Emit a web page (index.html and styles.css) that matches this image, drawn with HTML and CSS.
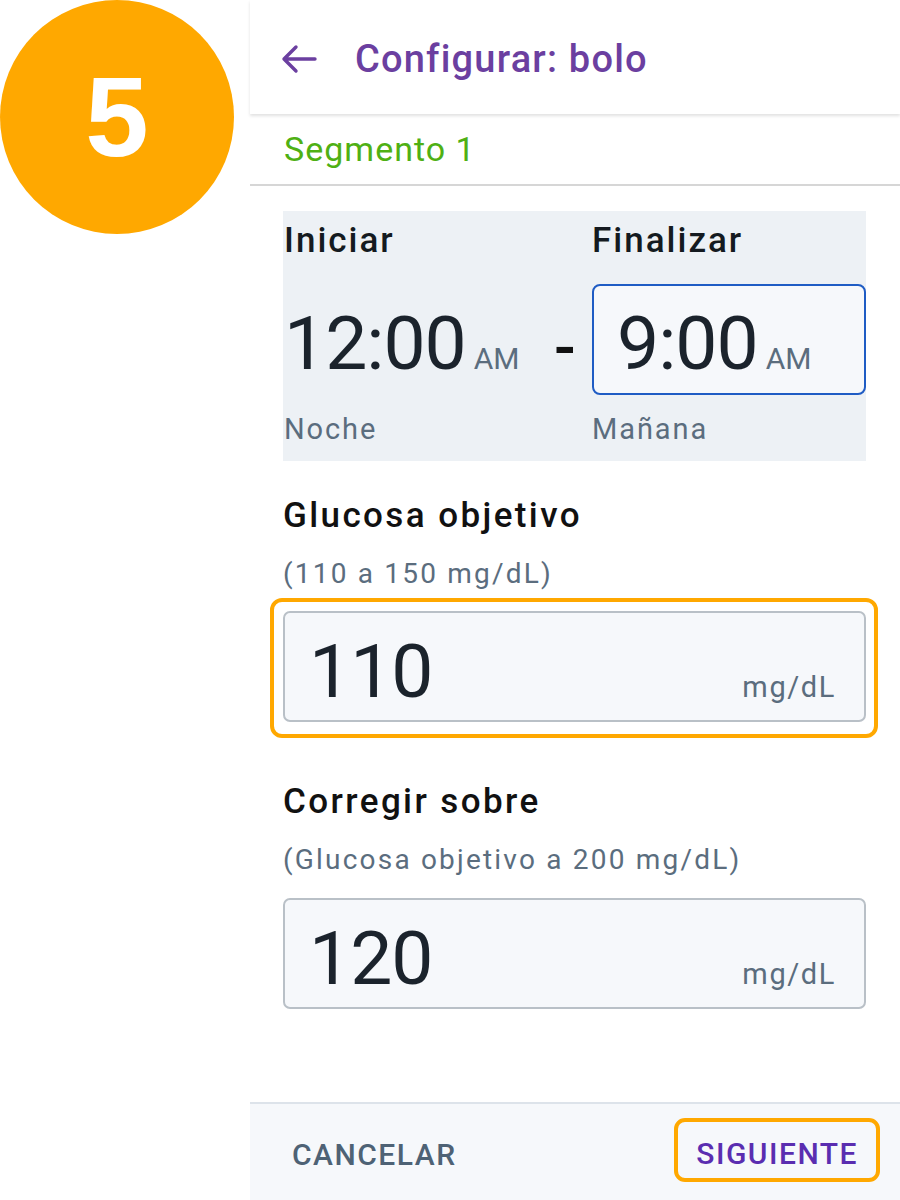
FILE: index.html
```html
<!DOCTYPE html>
<html lang="es">
<head>
<meta charset="utf-8">
<title>Configurar: bolo</title>
<link rel="stylesheet" href="styles.css">
</head>
<body>
<div class="badge">5</div>
<div class="screen">
  <header class="topbar">
    <svg class="back" width="36" height="30" viewBox="0 0 36 30" aria-hidden="true">
      <path d="M34 15 H3 M15 3 L3 15 L15 27" fill="none" stroke="#6b3fa0" stroke-width="3.4" stroke-linecap="round" stroke-linejoin="round"/>
    </svg>
    <h1 class="title">Configurar: bolo</h1>
  </header>
  <div class="segment">Segmento 1</div>
  <main class="content">
    <section class="timecard">
      <div class="tcol">
        <div class="tlabel">Iniciar</div>
        <div class="trow"><span class="tnum">12:00</span><span class="ampm">AM</span></div>
        <div class="tsub">Noche</div>
      </div>
      <div class="dash">-</div>
      <div class="tcol">
        <div class="tlabel">Finalizar</div>
        <div class="trow selected"><span class="tnum">9:00</span><span class="ampm">AM</span></div>
        <div class="tsub">Mañana</div>
      </div>
    </section>

    <section class="field first">
      <h2 class="flabel">Glucosa objetivo</h2>
      <div class="fsub">(110 a 150 mg/dL)</div>
      <div class="highlight">
        <div class="input"><span class="inum">110</span><span class="unit">mg/dL</span></div>
      </div>
    </section>

    <section class="field second">
      <h2 class="flabel">Corregir sobre</h2>
      <div class="fsub">(Glucosa objetivo a 200 mg/dL)</div>
      <div class="input"><span class="inum">120</span><span class="unit">mg/dL</span></div>
    </section>
  </main>
  <footer class="footer">
    <button class="btn cancel">CANCELAR</button>
    <button class="btn next">SIGUIENTE</button>
  </footer>
</div>
</body>
</html>
```

FILE: styles.css
```css
* { box-sizing: border-box; }
html, body { margin: 0; padding: 0; }
body {
  width: 900px;
  height: 1200px;
  background: #ffffff;
  font-family: Roboto, "Noto Sans", "Liberation Sans", sans-serif;
  position: relative;
  overflow: hidden;
}
.badge {
  position: absolute;
  left: 0;
  top: 0;
  width: 234px;
  height: 234px;
  border-radius: 50%;
  background: #ffa800;
  color: #ffffff;
  font-family: "Liberation Sans", Arial, sans-serif;
  font-weight: 700;
  font-size: 114px;
  display: flex;
  align-items: center;
  justify-content: center;
  line-height: 1;
}
.screen {
  margin-left: 250px;
  width: 650px;
  height: 1200px;
  display: flex;
  flex-direction: column;
}
.topbar {
  height: 114px;
  display: flex;
  align-items: center;
  padding: 3px 0 0 31px;
  background: #fff;
  box-shadow: 0 2px 3px rgba(0,0,0,0.12);
  position: relative;
  z-index: 1;
}
.back { display: block; margin-top: 0; }
.title {
  margin: 0 0 0 38px;
  font-size: 38px;
  font-weight: 500;
  color: #6b3fa0;
  letter-spacing: 1.2px;
}
.segment {
  height: 72px;
  display: flex;
  align-items: center;
  padding-left: 34px;
  font-size: 34px;
  color: #4fb014;
  letter-spacing: 1px;
  border-bottom: 2px solid #d6d6d6;
}
.content {
  flex: 1;
  padding: 25px 34px 0 33px;
}
.timecard {
  background: #edf1f5;
  height: 250px;
  display: flex;
  padding: 7px 0 0 1px;
}
.tcol { display: flex; flex-direction: column; }
.tcol:first-child { width: 265px; }
.tcol:last-child { flex: 1; }
.tlabel {
  font-size: 35px;
  font-weight: 500;
  color: #141a20;
  line-height: 46px;
  letter-spacing: 2px;
  margin-bottom: 20px;
}
.trow {
  height: 111px;
  display: flex;
  align-items: baseline;
  padding-top: 21px;
}
.trow.selected {
  border: 2px solid #1f5cc4;
  border-radius: 8px;
  background: #f6f8fb;
  padding-left: 23px;
  padding-top: 19px;
}
.tnum {
  font-size: 75px;
  line-height: 76px;
  color: #1b232c;
  letter-spacing: -1px;
}
.ampm {
  font-size: 30px;
  color: #5b6d7e;
  margin-left: 8px;
}
.dash {
  width: 43px;
  padding-top: 96px;
  font-size: 64px;
  font-weight: 500;
  line-height: 70px;
  color: #111;
  text-align: left;
  padding-left: 5px;
}
.tsub {
  font-size: 29px;
  color: #5b6d7e;
  line-height: 36px;
  letter-spacing: 1.9px;
  margin-top: 16px;
}
.field { display: flex; flex-direction: column; }
.field.first { margin-top: 32px; }
.field.second { margin-top: 41px; }
.flabel {
  margin: 0;
  font-size: 35px;
  font-weight: 500;
  color: #111;
  line-height: 46px;
  letter-spacing: 2.4px;
}
.fsub {
  font-size: 28px;
  color: #5b6d7e;
  line-height: 36px;
  letter-spacing: 2.2px;
  margin-top: 17px;
  margin-bottom: 6px;
}
.second .fsub { margin-bottom: 20px; }
.highlight {
  margin: 0 -12px 0 -13px;
  border: 4px solid #ffa800;
  border-radius: 12px;
  padding: 9px 8px 12px 9px;
}
.input {
  height: 111px;
  flex-shrink: 0;
  border: 2px solid #b9c0c7;
  border-radius: 7px;
  background: #f6f8fb;
  display: flex;
  align-items: baseline;
  justify-content: space-between;
  padding: 20px 30px 0 24px;
}
.inum {
  font-size: 75px;
  line-height: 76px;
  color: #1b232c;
  letter-spacing: -1px;
}
.unit {
  font-size: 29px;
  color: #5b6d7e;
  letter-spacing: 1.6px;
  margin-right: -2px;
}
.footer {
  height: 98px;
  flex-shrink: 0;
  background: #f6f8fb;
  border-top: 2px solid #dde3ea;
  display: flex;
  align-items: center;
  justify-content: space-between;
  padding: 0 20px 0 42px;
}
.btn {
  font-family: Roboto, "Noto Sans", "Liberation Sans", sans-serif;
  font-size: 30px;
  font-weight: 500;
  letter-spacing: 1.5px;
  background: transparent;
  border: none;
  padding: 0;
  cursor: pointer;
}
.cancel { color: #4e6275; margin-top: 4px; }
.next {
  color: #5a2db0;
  border: 4px solid #ffa800;
  border-radius: 11px;
  height: 64px;
  padding: 6px 18px 0 18px;
  margin-top: -4px;
}
```
